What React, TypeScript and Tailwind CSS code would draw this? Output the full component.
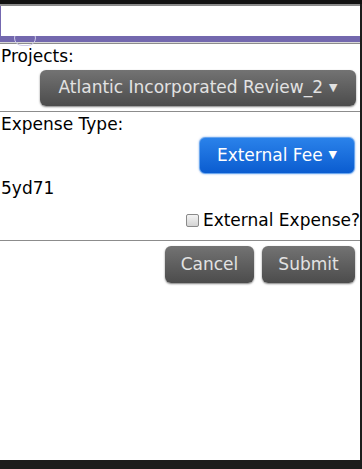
import React, { useState } from 'react';

const font = { fontFamily: '"DejaVu Sans", "Liberation Sans", sans-serif' };

const App: React.FC = () => {
  const [external, setExternal] = useState(false);

  return (
    <div className="w-[362px] h-[469px] bg-[#1c1c1c] flex flex-col" style={font}>
      {/* top edge */}
      <div className="h-[4px] bg-[#111]" />
      <div className="h-[2px] bg-[#8a8a8a] w-[360px]" />

      <div className="w-[360px] h-[454px] bg-white flex flex-col">
        {/* search bar */}
        <div className="relative">
          <div className="h-[30px] bg-white border-l border-[#7468b0] relative z-10" />
          <div className="h-[6px] bg-[#7368ae]" />
          <div className="absolute left-[14px] top-[24px] w-[22px] h-[16px] rounded-full border border-[#cfcbea]" />
          <div className="h-px bg-[#d8d8d8]" />
          <div className="h-px bg-[#8c8c8c]" />
        </div>

        <div className="text-[17px] leading-[20px] text-black pl-[1px] pt-[2px]">Projects:</div>
        <div className="flex justify-end pr-[4px] pt-[4px] pb-[5px]">
          <button className="w-[316px] h-[36px] rounded-[6px] bg-gradient-to-b from-[#737373] to-[#4c4c4c] shadow-[0_1px_2px_rgba(0,0,0,0.5)] text-[#e2e2e2] text-[17px] flex items-center justify-center gap-[6px]">
            <span>Atlantic Incorporated Review_2</span>
            <span className="text-[11px]">▼</span>
          </button>
        </div>
        <div className="h-px bg-[#8c8c8c]" />

        <div className="text-[17px] leading-[20px] text-black pl-[1px] pt-[2px]">Expense Type:</div>
        <div className="flex justify-end pr-[5px] pt-[3px]">
          <button className="w-[156px] h-[37px] rounded-[6px] bg-gradient-to-b from-[#2a82ea] to-[#0a5cd0] border border-[#6aa6ee] shadow-[0_0_2px_rgba(30,110,220,0.6)] text-white text-[17px] flex items-center justify-center gap-[6px]">
            <span>External Fee</span>
            <span className="text-[11px]">▼</span>
          </button>
        </div>
        <div className="text-[17px] leading-[20px] text-black pl-[1px] pt-[4px]">5yd71</div>

        <label className="flex items-center justify-end gap-[4px] pt-[12px] text-[17px] leading-[20px] text-black">
          <input
            type="checkbox"
            checked={external}
            onChange={() => setExternal(!external)}
            className="appearance-none w-[13px] h-[13px] border border-[#8a8a8a] rounded-[2px] bg-gradient-to-b from-[#f4f4f4] to-[#d4d4d4]"
          />
          <span>External Expense?</span>
        </label>

        <div className="h-px bg-[#8c8c8c] mt-[10px]" />

        <div className="flex justify-end gap-[8px] pr-[5px] pt-[5px]">
          <button className="w-[89px] h-[37px] rounded-[6px] bg-gradient-to-b from-[#737373] to-[#4c4c4c] shadow-[0_1px_2px_rgba(0,0,0,0.5)] text-[#e2e2e2] text-[17px]">
            Cancel
          </button>
          <button className="w-[93px] h-[37px] rounded-[6px] bg-gradient-to-b from-[#737373] to-[#4c4c4c] shadow-[0_1px_2px_rgba(0,0,0,0.5)] text-[#e2e2e2] text-[17px]">
            Submit
          </button>
        </div>
      </div>
    </div>
  );
};

export default App;
